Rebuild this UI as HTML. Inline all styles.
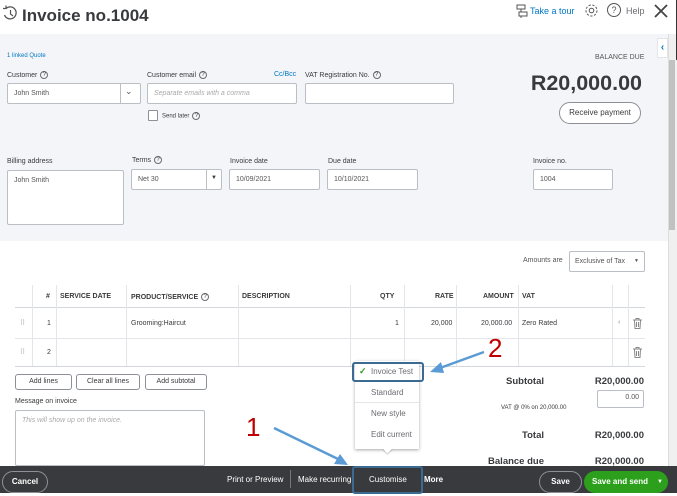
<!DOCTYPE html>
<html><head><meta charset="utf-8"><style>
*{box-sizing:border-box;margin:0;padding:0}
body{width:677px;height:496px;overflow:hidden;position:relative;background:#fff;font-family:"Liberation Sans",sans-serif;color:#393a3d;font-size:7px}
.a{position:absolute}
.lbl{position:absolute;font-size:7px;color:#393a3d}
.inp{position:absolute;background:#fff;border:1px solid #babec5;border-radius:2px;font-size:7px;color:#555;padding:6px 6px}
.q{display:inline-block;width:8px;height:8px;border:1px solid #6b6c72;border-radius:50%;font-size:6px;text-align:center;line-height:6px;margin-left:3px;vertical-align:middle}
.btn{position:absolute;border:1px solid #8d9096;border-radius:3px;background:#fff;font-size:7px;text-align:center;line-height:14px}
.th{position:absolute;top:293px;font-size:7px;font-weight:bold;color:#393a3d}
.vl{position:absolute;top:285px;width:1px;height:81px;background:#e3e5e8}
.menu div{height:21px;line-height:21px;padding-left:16px;font-size:8px;color:#6b6c72}
.tot{position:absolute;font-size:9.5px;font-weight:bold;text-align:right}
</style></head><body>
<svg class="a" style="left:2px;top:5px" width="16" height="16" viewBox="0 0 16 16"><path d="M4 3.5 A6 6 0 1 1 2.5 10" fill="none" stroke="#555" stroke-width="1.3"/><path d="M8.5 5v4l2.5 2" fill="none" stroke="#555" stroke-width="1.2"/><path d="M1 3.5h3v-3" fill="none" stroke="#555" stroke-width="1.2"/></svg>
<div class="a" style="left:22px;top:6px;font-size:17px;font-weight:bold;color:#393a3d">Invoice no.1004</div>
<svg class="a" style="left:516px;top:4px" width="12" height="14" viewBox="0 0 12 14"><rect x="1" y="1" width="8" height="4" fill="none" stroke="#555"/><rect x="3" y="8" width="8" height="4" fill="none" stroke="#555"/><path d="M5 5v3M5 12v2" stroke="#555"/></svg>
<div class="a" style="left:530px;top:6px;font-size:9px;color:#0077c5">Take a tour</div>
<svg class="a" style="left:584px;top:3px" width="15" height="15" viewBox="0 0 15 15"><circle cx="7.5" cy="7.5" r="2.3" fill="none" stroke="#555"/><circle cx="7.5" cy="7.5" r="5.5" fill="none" stroke="#555" stroke-dasharray="2.2 1.6"/></svg>
<div class="a" style="left:607px;top:3px;width:14px;height:14px;border:1.3px solid #555;border-radius:50%;font-size:9px;text-align:center;line-height:12px;color:#555">?</div>
<div class="a" style="left:626px;top:6px;font-size:9px;color:#6b6c72">Help</div>
<svg class="a" style="left:653px;top:3px" width="16" height="16" viewBox="0 0 16 16"><path d="M2 2L14 14M14 2L2 14" stroke="#444" stroke-width="1.8"/></svg>
<div class="a" style="left:0;top:34px;width:668px;height:207px;background:#f4f5f8"></div>
<div class="a" style="left:668px;top:34px;width:9px;height:432px;background:#f0f0f0;border-left:1px solid #ddd"></div>
<div class="a" style="left:669px;top:60px;width:6px;height:170px;background:#c1c1c1"></div>
<div class="a" style="left:676px;top:0;width:1px;height:60px;background:#333"></div>
<div class="a" style="left:657px;top:38px;width:11px;height:20px;background:#fff;border:1px solid #e3e5e8;color:#0077c5;font-size:10px;font-weight:bold;text-align:center;line-height:18px">‹</div>
<div class="lbl" style="left:7px;top:53px;color:#0077c5;font-size:6px">1 linked Quote</div>
<div class="lbl" style="left:595px;top:54px;font-size:7px;color:#555">BALANCE DUE</div>
<div class="a" style="left:520px;top:71px;width:122px;text-align:right;font-size:21.5px;font-weight:bold;color:#393a3d">R20,000.00</div>
<div class="a" style="left:559px;top:102px;width:82px;height:22px;border:1.5px solid #8d9096;border-radius:12px;background:#fff;font-size:8px;text-align:center;line-height:19px">Receive payment</div>
<div class="lbl" style="left:7px;top:71px">Customer<span class="q">?</span></div>
<div class="inp" style="left:7px;top:83px;width:134px;height:21px">John Smith</div>
<div class="a" style="left:120px;top:84px;width:1px;height:19px;background:#babec5"></div>
<div class="a" style="left:125px;top:86px;font-size:9px;color:#555">⌄</div>
<div class="lbl" style="left:147px;top:71px">Customer email<span class="q">?</span></div>
<div class="lbl" style="left:274px;top:71px;color:#0077c5">Cc/Bcc</div>
<div class="inp" style="left:147px;top:83px;width:150px;height:21px;color:#aaa;font-style:italic">Separate emails with a comma</div>
<div class="lbl" style="left:305px;top:71px">VAT Registration No.<span class="q">?</span></div>
<div class="inp" style="left:305px;top:83px;width:149px;height:21px"></div>
<div class="a" style="left:148px;top:110px;width:10px;height:11px;border:1px solid #8d9096;background:#fff;border-radius:1px"></div>
<div class="lbl" style="left:162px;top:112px;font-size:6px">Send later<span class="q">?</span></div>
<div class="lbl" style="left:7px;top:158px">Billing address</div>
<div class="inp" style="left:7px;top:170px;width:117px;height:55px">John Smith</div>
<div class="lbl" style="left:132px;top:156px">Terms<span class="q">?</span></div>
<div class="inp" style="left:131px;top:169px;width:91px;height:21px">Net 30</div>
<div class="a" style="left:206px;top:170px;width:1px;height:19px;background:#babec5"></div>
<div class="a" style="left:211px;top:175px;font-size:6px">▼</div>
<div class="lbl" style="left:230px;top:158px">Invoice date</div>
<div class="inp" style="left:229px;top:169px;width:91px;height:21px">10/09/2021</div>
<div class="lbl" style="left:328px;top:158px">Due date</div>
<div class="inp" style="left:327px;top:169px;width:91px;height:21px">10/10/2021</div>
<div class="lbl" style="left:533px;top:158px">Invoice no.</div>
<div class="inp" style="left:533px;top:169px;width:80px;height:21px">1004</div>
<div class="lbl" style="left:523px;top:257px;font-size:7px;color:#555">Amounts are</div>
<div class="inp" style="left:569px;top:251px;width:76px;height:21px;padding:6px 5px">Exclusive of Tax <span style="float:right;font-size:5px">▼</span></div>
<div class="a" style="left:15px;top:307px;width:630px;height:1px;background:#d4d7dc"></div>
<div class="a" style="left:15px;top:338px;width:630px;height:1px;background:#e3e5e8"></div>
<div class="a" style="left:15px;top:366px;width:630px;height:1px;background:#d4d7dc"></div>
<div class="vl" style="left:32px"></div><div class="vl" style="left:56px"></div><div class="vl" style="left:126px"></div><div class="vl" style="left:238px"></div><div class="vl" style="left:350px"></div><div class="vl" style="left:404px"></div><div class="vl" style="left:456px"></div><div class="vl" style="left:518px"></div><div class="vl" style="left:612px"></div><div class="vl" style="left:628px"></div>
<div class="th" style="left:46px">#</div>
<div class="th" style="left:60px">SERVICE DATE</div>
<div class="th" style="left:131px">PRODUCT/SERVICE<span class="q" style="font-weight:normal">?</span></div>
<div class="th" style="left:242px">DESCRIPTION</div>
<div class="th" style="left:380px">QTY</div>
<div class="th" style="left:435px">RATE</div>
<div class="th" style="left:483px">AMOUNT</div>
<div class="th" style="left:522px">VAT</div>
<div class="lbl" style="left:20px;top:319px;color:#aaa">⠿</div>
<div class="lbl" style="left:47px;top:320px">1</div>
<div class="lbl" style="left:131px;top:320px">Grooming:Haircut</div>
<div class="lbl" style="left:395px;top:320px">1</div>
<div class="lbl" style="left:431px;top:320px">20,000</div>
<div class="lbl" style="left:481px;top:320px">20,000.00</div>
<div class="lbl" style="left:522px;top:320px">Zero Rated</div>
<div class="lbl" style="left:618px;top:319px;color:#888">‹</div>
<svg class="a" style="left:633px;top:318px" width="9" height="11" viewBox="0 0 9 11"><path d="M0 2h9M3 2V0.5h3V2M1.5 2.5l0.5 8h5l0.5-8M3.5 4v5M5.5 4v5" fill="none" stroke="#888" stroke-width="1"/></svg>
<div class="lbl" style="left:20px;top:348px;color:#aaa">⠿</div>
<div class="lbl" style="left:47px;top:349px">2</div>
<svg class="a" style="left:633px;top:347px" width="9" height="11" viewBox="0 0 9 11"><path d="M0 2h9M3 2V0.5h3V2M1.5 2.5l0.5 8h5l0.5-8M3.5 4v5M5.5 4v5" fill="none" stroke="#888" stroke-width="1"/></svg>
<div class="btn" style="left:15px;top:374px;width:57px;height:16px">Add lines</div>
<div class="btn" style="left:76px;top:374px;width:64px;height:16px">Clear all lines</div>
<div class="btn" style="left:145px;top:374px;width:62px;height:16px">Add subtotal</div>
<div class="lbl" style="left:15px;top:398px">Message on invoice</div>
<div class="inp" style="left:15px;top:410px;width:190px;height:56px;color:#aaa;font-style:italic">This will show up on the invoice.</div>
<div class="tot" style="left:480px;top:376px;width:64px">Subtotal</div>
<div class="tot" style="left:580px;top:376px;width:64px">R20,000.00</div>
<div class="inp" style="left:597px;top:390px;width:47px;height:18px;text-align:right;padding:3px 4px">0.00</div>
<div class="lbl" style="left:501px;top:405px;font-size:6px">VAT @ 0% on 20,000.00</div>
<div class="tot" style="left:480px;top:430px;width:64px">Total</div>
<div class="tot" style="left:580px;top:430px;width:64px">R20,000.00</div>
<div class="tot" style="left:480px;top:456px;width:64px">Balance due</div>
<div class="tot" style="left:580px;top:456px;width:64px">R20,000.00</div>
<div class="a menu" style="left:355px;top:361px;width:64px;height:88px;background:#fff;box-shadow:0 1px 3px rgba(0,0,0,.35)">
<div>Invoice Test</div><div style="border-bottom:1px solid #e3e5e8">Standard</div><div>New style</div><div>Edit current</div></div>
<div class="a" style="left:384px;top:445px;width:7px;height:7px;background:#fff;transform:rotate(45deg);box-shadow:1px 1px 1px rgba(0,0,0,.2)"></div>
<div class="a" style="left:359px;top:366px;color:#2ca01c;font-size:9px;font-weight:bold">✓</div>
<div class="a" style="left:352px;top:362px;width:72px;height:20px;border:2.5px solid #3b6a93;border-radius:3px"></div>
<div class="a" style="left:488px;top:333px;font-size:26px;color:#c00000">2</div>
<div class="a" style="left:246px;top:412px;font-size:26px;color:#c00000">1</div>
<svg class="a" style="left:0;top:0" width="677" height="496"><g stroke="#5b9bd5" stroke-width="2.5" fill="#5b9bd5"><line x1="484" y1="352" x2="440" y2="368"/><polygon points="430,372 441,362 444,373" stroke="none"/><line x1="274" y1="428" x2="338" y2="459"/><polygon points="348,465 334,464 340,454" stroke="none"/></g></svg>
<div class="a" style="left:0;top:466px;width:677px;height:27px;background:#393a3d"></div>
<div class="a" style="left:0;top:493px;width:677px;height:3px;background:#fff"></div>
<div class="a" style="left:2px;top:471px;width:46px;height:22px;border:1px solid #8d9096;border-radius:12px;color:#fff;font-size:8px;font-weight:bold;text-align:center;line-height:20px">Cancel</div>
<div class="a" style="left:227px;top:475px;color:#fff;font-size:8px">Print or Preview</div>
<div class="a" style="left:290px;top:470px;width:1px;height:18px;background:#777"></div>
<div class="a" style="left:298px;top:475px;color:#fff;font-size:8px">Make recurring</div>
<div class="a" style="left:369px;top:475px;color:#fff;font-size:8px">Customise</div>
<div class="a" style="left:424px;top:475px;color:#fff;font-size:8px;font-weight:bold">More</div>
<div class="a" style="left:352px;top:466px;width:71px;height:28px;border:2.5px solid #3b6a93;border-radius:3px"></div>
<div class="a" style="left:539px;top:471px;width:43px;height:22px;border:1px solid #8d9096;border-radius:12px;color:#fff;font-size:8px;font-weight:bold;text-align:center;line-height:20px">Save</div>
<div class="a" style="left:584px;top:471px;width:84px;height:22px;background:#2ca01c;border-radius:12px;color:#fff;font-size:8px;font-weight:bold;line-height:22px;padding-left:8px">Save and send<span style="position:absolute;right:5px;font-size:6px">▼</span></div>
</body></html>
